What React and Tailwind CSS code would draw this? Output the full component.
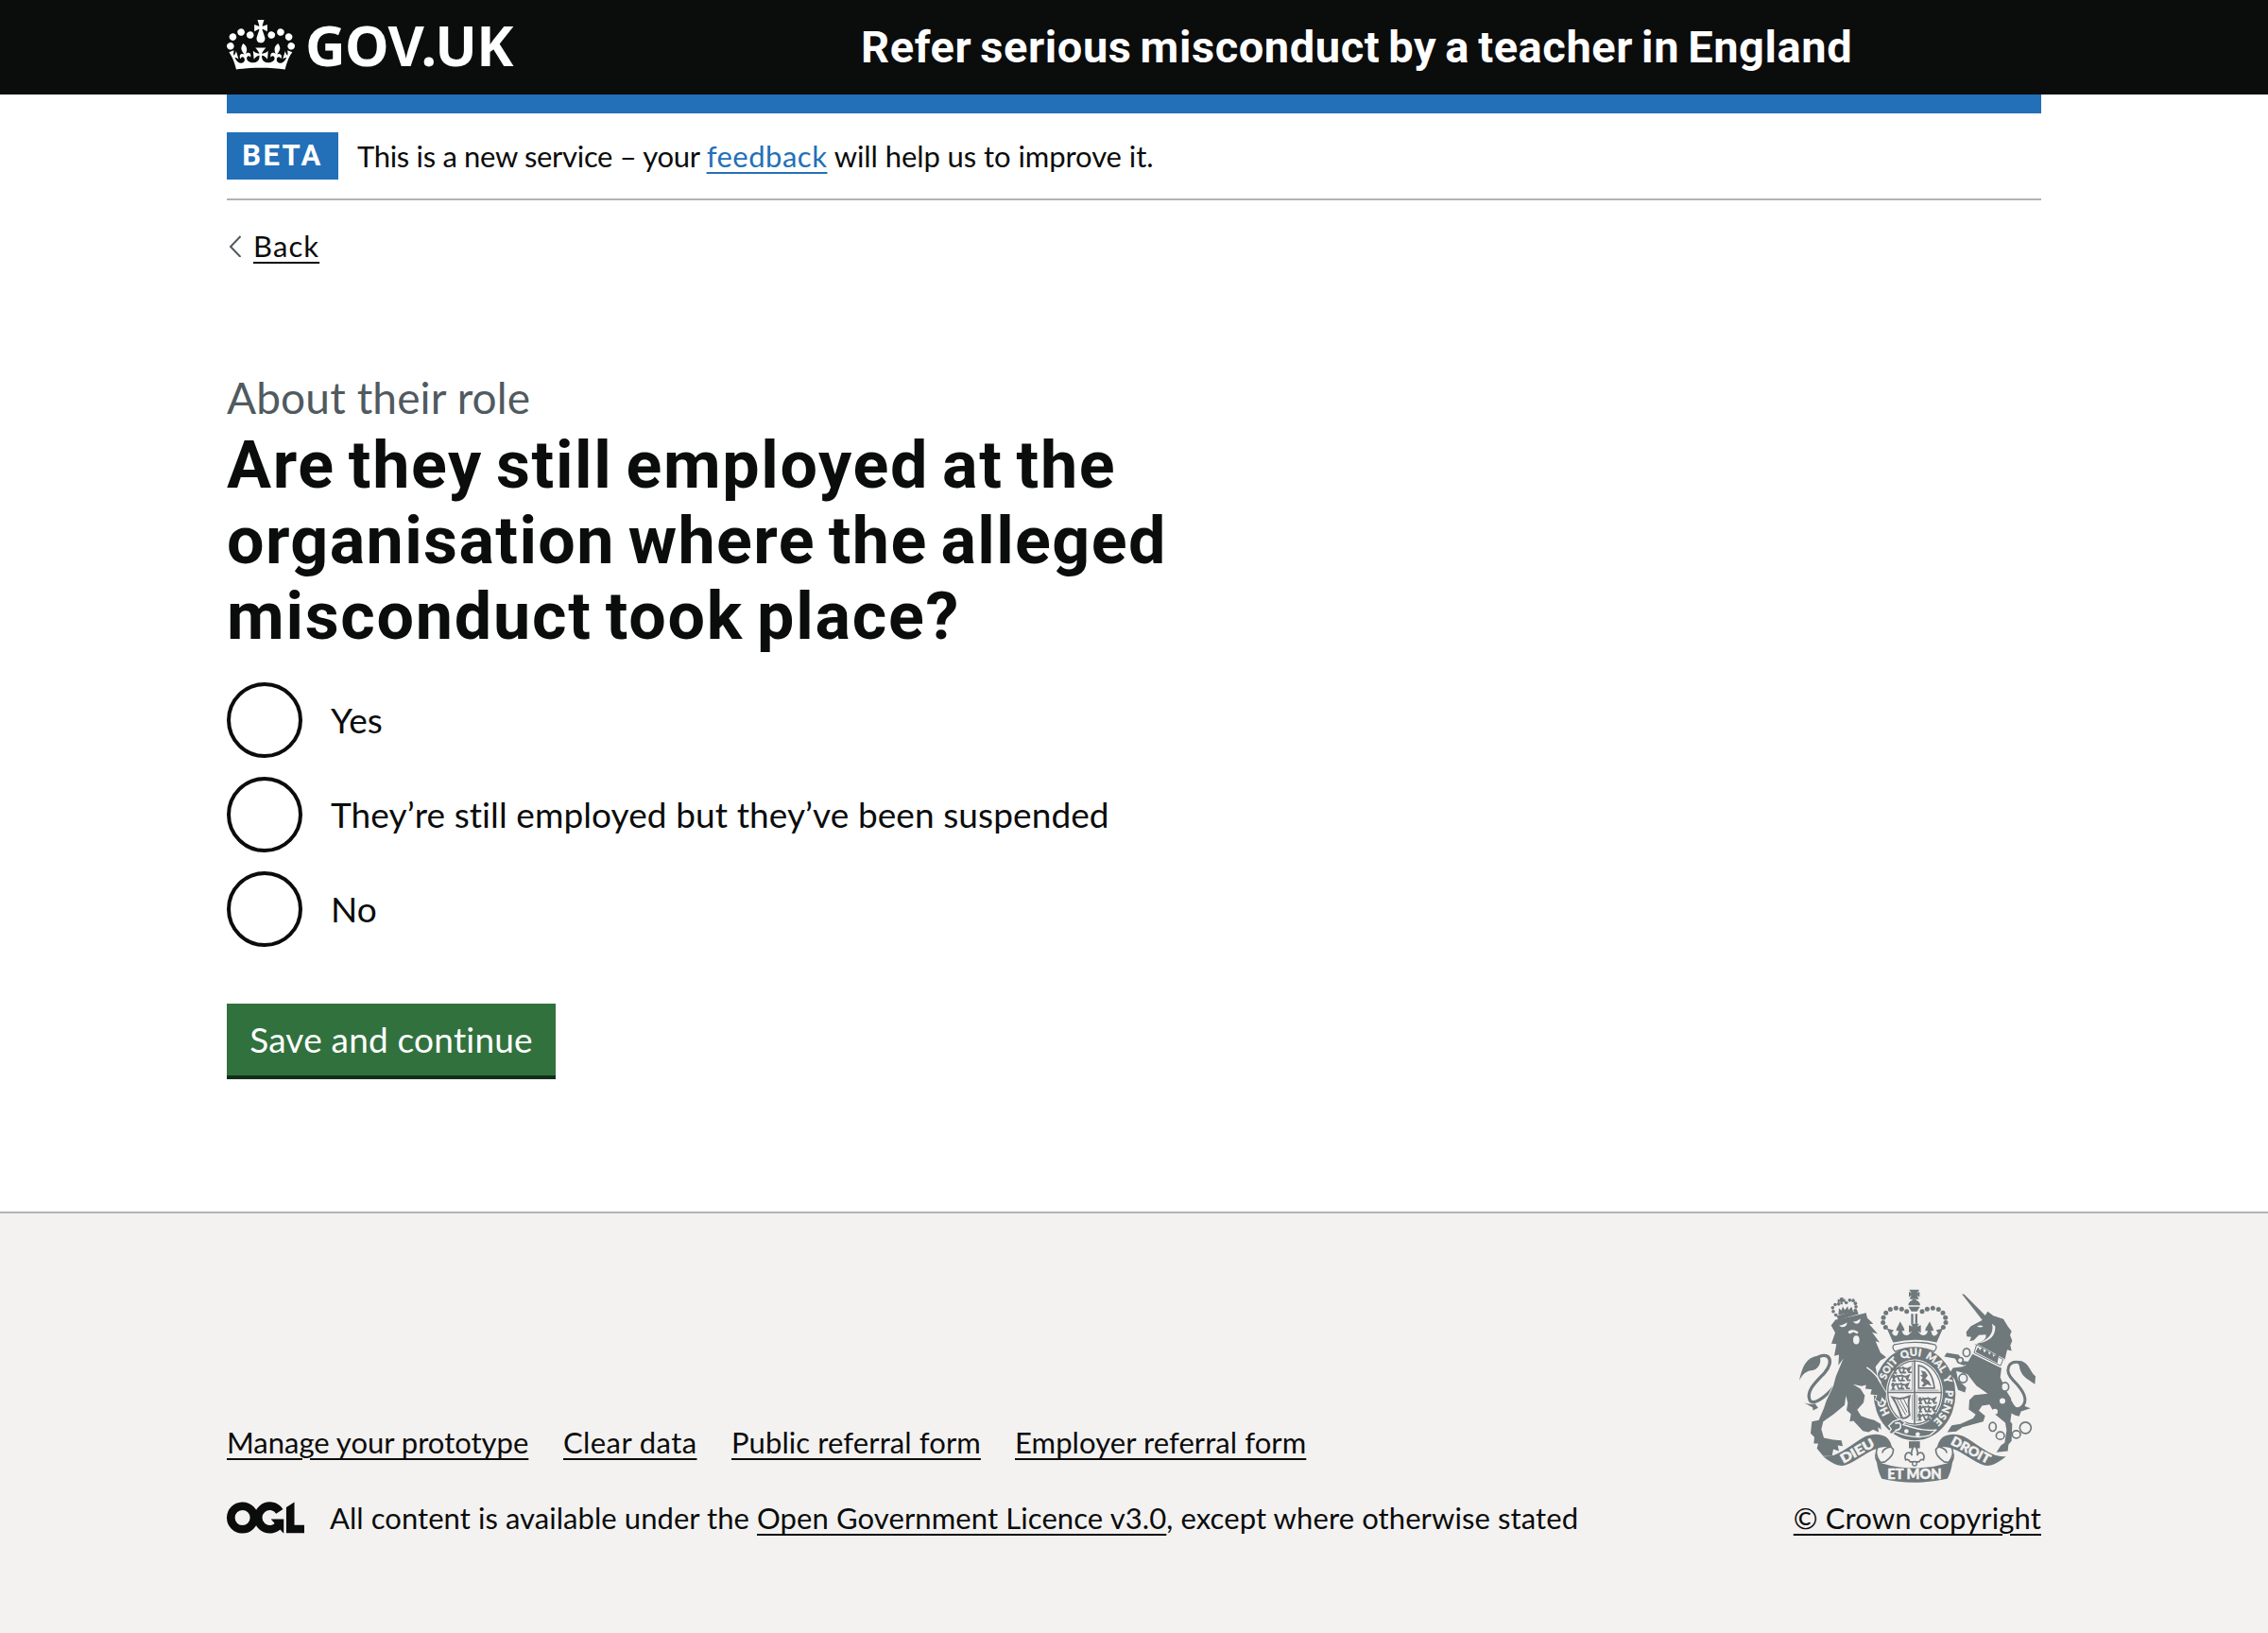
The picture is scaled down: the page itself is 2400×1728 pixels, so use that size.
const CREST = "#6f787b";
const PAPER = "#f3f2f1";

function Crown() {
  return (
    <svg viewBox="0 0 132 97" className="h-[53px] w-[72px] shrink-0" fill="currentColor" aria-hidden="true">
      <path d="M25 30.2c3.5 1.5 7.7-.2 9.1-3.7 1.5-3.6-.2-7.8-3.9-9.2-3.6-1.4-7.6.3-9.1 3.9-1.4 3.5.3 7.5 3.9 9zM9 39.5c3.6 1.5 7.8-.2 9.2-3.7 1.5-3.6-.2-7.8-3.9-9.1-3.6-1.5-7.6.2-9.1 3.8-1.4 3.5.3 7.5 3.8 9zM4.4 57.2c3.5 1.5 7.7-.2 9.1-3.8 1.5-3.6-.2-7.7-3.9-9.1-3.5-1.5-7.6.3-9.1 3.8-1.4 3.5.3 7.6 3.9 9.1zm38.3-21.4c3.5 1.5 7.7-.2 9.1-3.8 1.5-3.6-.2-7.7-3.9-9.1-3.6-1.5-7.6.3-9.1 3.8-1.3 3.6.4 7.7 3.9 9.1zm64.4-5.6c-3.6 1.5-7.8-.2-9.1-3.7-1.5-3.6.2-7.8 3.8-9.2 3.6-1.4 7.7.3 9.2 3.9 1.3 3.5-.4 7.5-3.9 9zm15.9 9.3c-3.6 1.5-7.7-.2-9.1-3.7-1.5-3.6.2-7.8 3.7-9.1 3.6-1.5 7.7.2 9.2 3.8 1.5 3.5-.3 7.5-3.8 9zm4.7 17.7c-3.6 1.5-7.8-.2-9.2-3.8-1.5-3.6.2-7.7 3.9-9.1 3.6-1.5 7.7.3 9.2 3.8 1.3 3.5-.4 7.6-3.9 9.1zM89.3 35.8c-3.6 1.5-7.8-.2-9.2-3.8-1.4-3.6.2-7.7 3.9-9.1 3.6-1.5 7.7.3 9.2 3.8 1.4 3.6-.3 7.7-3.9 9.1zM69.7 17.7l8.9 4.7V9.3l-8.9 2.8c-.2-.3-.5-.6-.9-.9L72.4 0H59.6l3.5 11.2c-.3.3-.6.5-.9.9l-8.8-2.8v13.1l8.8-4.7c.3.3.6.7.9.9l-5 15.4v.1c-.2.8-.4 1.6-.4 2.4 0 4.1 3.1 7.5 7 8.1h.2c.3 0 .7.1 1 .1.4 0 .7 0 1-.1h.2c4-.6 7.1-4.1 7.1-8.1 0-.8-.1-1.7-.4-2.4V34l-5.1-15.4c.4-.2.7-.6 1-.9zM66 92.8c16.9 0 32.8 1.1 47.1 3.2 4-16.9 8.9-26.7 14-33.5l-9.6-3.4c1 4.9 1.1 7.2 0 10.2-1.5-1.4-3-4.3-4.2-8.7L108.6 76c2.8-2 5-3.2 7.5-3.3-4.4 9.4-10 11.9-13.6 11.2-4.3-.8-6.3-4.6-5.6-7.9 1-4.7 5.7-5.9 8-.5 4.3-8.7-3-11.4-7.6-8.8 7.1-7.2 7.9-13.5 2.1-21.1-8 6.1-8.1 12.3-4.5 20.8-4.7-5.4-12.1-2.5-9.5 6.2 3.4-5.2 7.9-2 7.2 3.1-.6 4.3-6.4 7.8-13.5 7.2-10.3-.9-10.9-8-11.2-13.8 2.5-.5 7.1 1.8 11 7.3L80.2 60c-4.1 4.4-8 5.3-12.3 5.4 1.4-4.4 8-11.6 8-11.6H55.5s6.4 7.2 7.9 11.6c-4.2-.1-8-1-12.3-5.4l1.4 16.4c3.9-5.5 8.5-7.7 10.9-7.3-.3 5.8-.9 12.8-11.1 13.8-7.2.6-12.9-2.9-13.5-7.2-.7-5 3.8-8.3 7.1-3.1 2.7-8.7-4.6-11.6-9.4-6.2 3.7-8.5 3.6-14.7-4.6-20.8-5.8 7.6-5 13.9 2.2 21.1-4.7-2.6-11.9.1-7.7 8.8 2.3-5.5 7.1-4.2 8.1.5.7 3.3-1.3 7.1-5.7 7.9-3.5.7-9-1.8-13.5-11.2 2.5.1 4.7 1.3 7.5 3.3l-4.7-15.4c-1.2 4.4-2.7 7.2-4.3 8.7-1.1-3-.9-5.3 0-10.2l-9.5 3.4c5 6.9 9.9 16.7 14 33.5 14.8-2.1 30.8-3.2 47.7-3.2z" />
    </svg>
  );
}

function LicenceMark() {
  return (
    <svg viewBox="0 0 483.2 195.7" className="h-[34px] w-[82px] shrink-0" fill="none" stroke="currentColor" aria-hidden="true">
      <circle cx="97.8" cy="97.8" r="72.5" strokeWidth="50.7" />
      <path d="M329 58.5A72.5 72.5 0 1 0 329 137" strokeWidth="50.7" />
      <path d="M275 106h80v88h-3l-77-88z" fill="currentColor" stroke="none" />
      <path d="M370.800 32.400L421.500 0v142.800h61.700v50.700H370.800z" fill="currentColor" stroke="none" />
    </svg>
  );
}

const ARCH = [[383, 113], [367, 105], [349, 102], [331, 106], [317, 117], [309, 132], [308, 148], [316, 163]];
const LION_PEARLS = [[158, 124], [150, 113], [148, 101], [156, 91], [167, 89], [191, 85], [202, 77], [213, 78], [220, 87], [222, 98], [220, 109]];
const CHAIN = [[573, 243, 11, 13], [553, 268, 9, 9], [562, 325, 13, 14], [695, 352, 12, 14], [656, 479, 11, 14], [680, 507, 13, 12], [731, 503, 13, 12], [760, 482, 18, 18]];

function Passant({ x, y }) {
  return (
    <g transform={`translate(${x} ${y})`} stroke={CREST} strokeWidth="5.500" fill="none" strokeLinecap="round">
      <path d="M4 14C0 6 6 2 8 8M4 14c10-8 28-8 40-4M44 10l10-4-4 9M8 15l-4 8h6M20 13l4 9h6M34 13l-2 9h7M46 13l4 8h7" />
      <path d="M14 4l6 4M30 3l6 4" strokeWidth="3" />
    </g>
  );
}

function RoyalArms() {
  return (
    <svg viewBox="42 42 750 614" className="h-[205px] w-[250px]" fill={CREST} aria-hidden="true">
      {/* imperial crown */}
      <path d="M391 44h32l-7 11 8-5v17l-8-5 6 12h-30l6-12-8 5V50l8 5z" />
      <path d="M401 74h12v10h-12z" />
      <path d="M388 93a19 17 0 0 1 38 0zM389 98h36l-9 15h-18z" />
      <path d="M397 120h7v32h-7zM410 120h7v32h-7z" />
      {ARCH.map(([x, y]) => (
        <g key={y}>
          <circle cx={x} cy={y} r="7.500" />
          <circle cx={815 - x} cy={y} r="7.500" />
        </g>
      ))}
      <path d="M340 211L320 167l22 5-6 8c6 12 14 12 18 6l4-12-8 0c0-10 6-14 12-30 8 16 14 20 14 30l-8 0c2 12 12 18 22 12l10-10-10 4v-24l12 5-6-9h26l-6 9 12-5v24l-10-4 10 10c10 6 20 0 22-12l-8 0c0-10 6-14 14-30 6 16 12 20 12 30l-8 0 4 12c4 6 12 6 18-6l-6-8 22-5-20 44q-68-16-136 0z" />

      {/* garter and shield */}
      <ellipse cx="408" cy="374" rx="130" ry="148" />
      <path d="M344 218q64-15 128 0q11 8-2 22q-62-26-124 0q-13-14-2-22z" fill={PAPER} stroke={CREST} strokeWidth="4" />
      <ellipse cx="408" cy="370" rx="90" ry="105" fill={PAPER} />
      <ellipse cx="408" cy="370" rx="85" ry="100" fill="none" stroke={CREST} strokeWidth="4" />
      <path d="M408 268v204M320 370h176" stroke={CREST} strokeWidth="5" />
      <path d="M401 273v90h-72M415 377v85M401 377v80M415 363h70" fill="none" stroke={CREST} strokeWidth="2" />
      <Passant x={340} y={285} />
      <Passant x={336} y={310} />
      <Passant x={334} y={336} />
      <Passant x={420} y={382} />
      <Passant x={420} y={408} />
      <Passant x={418} y={434} />
      <path d="M421 284c25 4 45 28 50 72h-50z" fill="none" stroke={CREST} strokeWidth="5" />
      <path d="M428 300l14 4 8 12-8 10 12 8 8 16-14-6-10 8-8-2 8-10-10-8 6-10-8-6 8-4z" />
      <path d="M338 386q28 8 54-4q-6 24 0 60q-14 14-26 8q-8-34-28-64z" fill="none" stroke={CREST} strokeWidth="6" />
      <path d="M352 392l28 50M362 391l22 42M373 390l14 28M344 392l26 56" stroke={CREST} strokeWidth="3" />
      <path id="garter" d="M352 462A99 115 0 0 1 408 254A99 115 0 0 1 408 484" fill="none" />
      <g fill={PAPER} stroke={PAPER} strokeWidth="1" fontFamily="Lato, sans-serif" fontWeight="900" fontSize="33">
        <text><textPath href="#garter" startOffset="34">HO</textPath></text>
        <text fontSize="31"><textPath href="#garter" startOffset="144">SOIT</textPath></text>
        <text><textPath href="#garter" startOffset="229">QUI</textPath></text>
        <text><textPath href="#garter" startOffset="305">MAL</textPath></text>
        <text><textPath href="#garter" startOffset="390">Y</textPath></text>
        <text letterSpacing="2"><textPath href="#garter" startOffset="432">PENSE</textPath></text>
      </g>
      <path d="M340 462l22-8 16 12-6 6q70 24 106 16l-22 18q-50 14-110-12l-10 8-10-4 8-12-8-10z" stroke={PAPER} strokeWidth="4" />
      <path d="M346 468q18-6 18 8t-18 14" fill="none" stroke={PAPER} strokeWidth="5" />
      <g fill={PAPER}><circle cx="382" cy="493" r="7" /><circle cx="418" cy="503" r="7" /></g>

      {/* lion */}
      <path d="M92 264C136 234 156 270 122 308C92 340 62 366 76 396C88 410 124 386 152 352" fill="none" stroke={CREST} strokeWidth="10" />
      <path d="M42 332C50 300 58 256 106 254C116 276 100 302 78 300C60 304 50 316 42 332zM58 403q20 6 34 2l10 14-16 8-2-10z" />
      <path d="M143 157L157 139Q205 130 254 117L258 134L277 152L264 153L291 184L273 179L297 211L284 207L300 244L318 258L300 268L284 288L292 330L318 372L316 398L304 384L300 402L284 392L290 378L268 376L272 360L252 358L254 346L240 350L212 344L236 358L250 380L246 402L226 425L238 444Q262 454 280 458L300 470L302 488L292 480L294 496L276 488L262 496L244 492L214 460L202 462L206 438L192 426L196 404L190 380L186 410L152 438L118 462L112 486L120 514L150 520L176 522L180 540L164 538L168 556L150 550L146 572L118 572L98 548L102 532L88 532L90 512L78 500L82 462L104 458L120 420L128 396L150 350L158 320L182 262L166 284L168 250L153 254L160 216L144 215L156 180z" stroke={PAPER} strokeWidth="5" paintOrder="stroke" />
      <path d="M256 290q30 20 46 50" fill="none" stroke={PAPER} strokeWidth="4" />
      <g fill={PAPER}>
        <path d="M168 158q12-2 26-10-2 16-18 14zM212 146q14-2 24-10 0 16-14 16z" />
        <path d="M196 178q12-14 34 0l-4 6-12-6-12 6z" />
        <ellipse cx="223" cy="203" rx="10" ry="14" />
      </g>
      <path d="M160 127L226 110L230 121L166 140z" />
      <path d="M166 124l2-22 8 8 4-14 6 12 10-12 2 12 10-10 6 18z" />
      <path d="M170 70l12-2-1 6 7-1v10l-9-1 1 8h-7l-1-8-8 2v-10l7 1z" />
      {LION_PEARLS.map(([x, y]) => <circle key={`${x}-${y}`} cx={x} cy={y} r="5.500" />)}

      {/* unicorn */}
      <path d="M558 57l8 2 74 74-16 8z" />
      <path d="M572 178L586 160L624 140L640 113L658 126L690 137L704 160L716 176L711 188L718 206L712 220L716 238L702 234L694 268L598 218Q640 204 634 186L612 188L596 204L583 207L588 194L574 192z" />
      <path d="M606 160q10-6 20 0-8 6-20 0zM654 152q10 40-42 62 54-10 52-54z" fill={PAPER} />
      <path d="M592 248L684 292L680 322L700 366L714 388L718 420L712 462L718 470L716 524L706 536L704 556L668 560L682 538L694 530L700 490L696 466L664 440L646 408L622 412L612 428L632 444L626 462L560 480L540 494L512 496L526 474L554 470L594 452L602 440L580 424L582 394L598 378L640 374L604 348L576 312L556 306L540 302L546 330L572 354L568 370L546 362L536 330L520 308L530 292L560 288L574 282L562 284L546 276L536 262L502 256L510 244L548 250L562 270L578 272z" />
      <path d="M603 214l92 50-12 28-91-46z" fill={PAPER} />
      <path d="M605 218l84 47-8 20-84-41z" fill="none" stroke={CREST} strokeWidth="3" />
      <path d="M602 242l7-16 7 10 8-9 5 16 10-9 6 16 9-9 4 16 12-10 5 6-4 24z" />
      <path d="M750 276C702 264 692 302 722 332C752 362 774 396 746 418C734 428 724 422 712 398" fill="none" stroke={CREST} strokeWidth="9" />
      <path d="M730 270C772 266 772 304 792 318L790 344C766 326 744 320 740 284zM704 400q20 26 50 12l22 8-30 10-6 16q-30-8-40-26z" />
      {CHAIN.map(([x, y, rx, ry]) => <ellipse key={`${x}-${y}`} cx={x} cy={y} rx={rx} ry={ry} fill={PAPER} stroke={CREST} strokeWidth="5" />)}
      <g fill={PAPER}><circle cx="687" cy="397" r="9" /><circle cx="663" cy="431" r="9" /></g>

      {/* fleur-de-lis */}
      <path d="M390 525h35v22h-35z" />
      <path d="M408 538q14 16 8 32q4-12 16-8q10 8 4 22q-8-4-14 6h-28q-6-10-14-6q-6-14 4-22q12-4 16 8q-6-16 8-32z" fill={PAPER} stroke={CREST} strokeWidth="5" />
      <circle cx="408" cy="596" r="7" fill={PAPER} stroke={CREST} strokeWidth="4" />

      {/* motto ribbon */}
      <path d="M290 546q-10 22 10 46l14-2q30-20 26-40l-8-8q-26 6-26 20M526 546q10 22-10 46l-14-2q-30-20-26-40l8-8q26 6 26 20" fill={PAPER} stroke={CREST} strokeWidth="5" />
      <path d="M118 573C165 578 205 535 250 510C270 500 300 500 316 510C330 520 334 534 337 546C320 540 305 542 290 548C250 560 225 590 185 602C160 605 140 590 118 573zM698 573C651 578 611 535 566 510C546 500 516 500 500 510C486 520 482 534 479 546C496 540 511 542 526 548C566 560 591 590 631 602C656 605 676 590 698 573z" />
      <path d="M282 560q4 22 20 34q106 32 212 0q16-12 20-34q2 18-6 32q-4 30-16 52q-104 24-208 0q-12-22-16-52q-8-14-6-32z" />
      <g fill={PAPER} stroke={PAPER} strokeWidth="1.500" fontFamily="Lato, sans-serif" fontWeight="900" textAnchor="middle">
        <text x="408" y="645" fontSize="46" textLength="172" lengthAdjust="spacingAndGlyphs">ET MON</text>
        <text transform="translate(233 568) rotate(-29)" fontSize="41" textLength="116" lengthAdjust="spacingAndGlyphs">DIEU</text>
        <text transform="translate(580 565) rotate(28)" fontSize="41" textLength="134" lengthAdjust="spacingAndGlyphs">DROIT</text>
      </g>
    </svg>
  );
}

const OPTIONS = ["Yes", "They’re still employed but they’ve been suspended", "No"];
const LINK = "underline decoration-2 underline-offset-[5px]";

export default function App() {
  return (
    <div className="flex min-h-[1728px] w-full flex-col bg-white font-[Lato,sans-serif] text-[31px] leading-[50px] text-[#0b0c0c] [font-variant-ligatures:none]">
      <header className="bg-[#0b0c0c] text-white">
        <div className="mx-auto flex h-[100px] w-[1920px] items-center font-[Roboto,sans-serif] font-bold whitespace-nowrap">
          <a className="flex w-[671px] items-center gap-[11px]">
            <span className="-mt-[5px]"><Crown /></span>
            <span className="-mt-[6px] font-['Noto_Sans',sans-serif] text-[59px] leading-none tracking-[-0.6px]">GOV.UK</span>
          </a>
          <span className="text-[47px] tracking-[0.58px] [word-spacing:-3.2px]">Refer serious misconduct by a teacher in England</span>
        </div>
      </header>

      <div className="mx-auto w-[1920px]">
        <div className="h-5 bg-[#2370b8]" />
        <div className="flex gap-5 border-b-2 border-[#b1b4b6] py-5 whitespace-nowrap">
          <strong className="flex h-[50px] w-[118px] items-center justify-center bg-[#2370b8] font-[Roboto,sans-serif] font-bold tracking-[2.4px] text-white">BETA</strong>
          <p className="tracking-[-0.32px]">
            This is a new service – your{" "}
            <a className={`${LINK} tracking-[0.5px] text-[#2370b8]`}>feedback</a>
            <span className="tracking-[-0.07px]"> will help us to improve it.</span>
          </p>
        </div>
        <a className="mt-[23px] flex items-center gap-[13px]">
          <svg viewBox="0 0 15 24" className="h-6 w-[15px]" fill="none" stroke="#505a5f" strokeWidth="2" aria-hidden="true">
            <path d="M14.500 2L4 13l10.500 11" />
          </svg>
          <span className={`${LINK} tracking-[1.1px]`}>Back</span>
        </a>

        <main className="mt-[105px] w-[1270px]">
          <span className="block pt-px text-[46px] leading-[60px] tracking-[0.15px] text-[#505a5f]">About their role</span>
          <h1 className="mt-px font-[Roboto,sans-serif] text-[70px] leading-[80px] font-bold tracking-[1.65px] whitespace-nowrap [word-spacing:-5px]">
            Are they still employed at the
            <br />
            <span className="tracking-[1.4px]">organisation where the alleged</span>
            <br />
            <span className="tracking-[1.75px]">misconduct took place?</span>
          </h1>
          <div className="mt-[30px] flex flex-col gap-5">
            {OPTIONS.map((option) => (
              <label key={option} className="flex h-20 items-center gap-[30px] text-[37px] tracking-[0.09px]">
                <span className="size-20 rounded-full border-4 border-[#0b0c0c]" />
                {option}
              </label>
            ))}
          </div>
          <button className="mt-[60px] flex h-[76px] w-[348px] items-center justify-center bg-[#31713e] text-[37px] tracking-[0.2px] whitespace-nowrap text-white shadow-[0_4px_0_#112e1b]">
            Save and continue
          </button>
        </main>
      </div>

      <footer className="mt-[144px] flex-1 border-t-2 border-[#b1b4b6] bg-[#f3f2f1]">
        <div className="mx-auto flex w-[1920px] items-end justify-between pt-20 whitespace-nowrap">
          <div>
            <nav className="flex">
              <a className={`${LINK} w-[356px]`}>Manage your prototype</a>
              <a className={`${LINK} w-[178px] tracking-[0.4px]`}>Clear data</a>
              <a className={`${LINK} w-[300px] tracking-[0.1px]`}>Public referral form</a>
              <a className={`${LINK} tracking-[0.08px]`}>Employer referral form</a>
            </nav>
            <div className="mt-[30px] flex items-center gap-[27px] tracking-[0.1px]">
              <LicenceMark />
              <p>
                <span className="tracking-[0.06px]">All content is available under the </span>
                <a className={LINK}>Open Government Licence v3.0</a>, except where otherwise stated
              </p>
            </div>
          </div>
          <a className="flex flex-col items-end">
            <span className="mr-[6px]"><RoyalArms /></span>
            <span className={`${LINK} mt-3 tracking-[0.13px]`}>© Crown copyright</span>
          </a>
        </div>
      </footer>
    </div>
  );
}
